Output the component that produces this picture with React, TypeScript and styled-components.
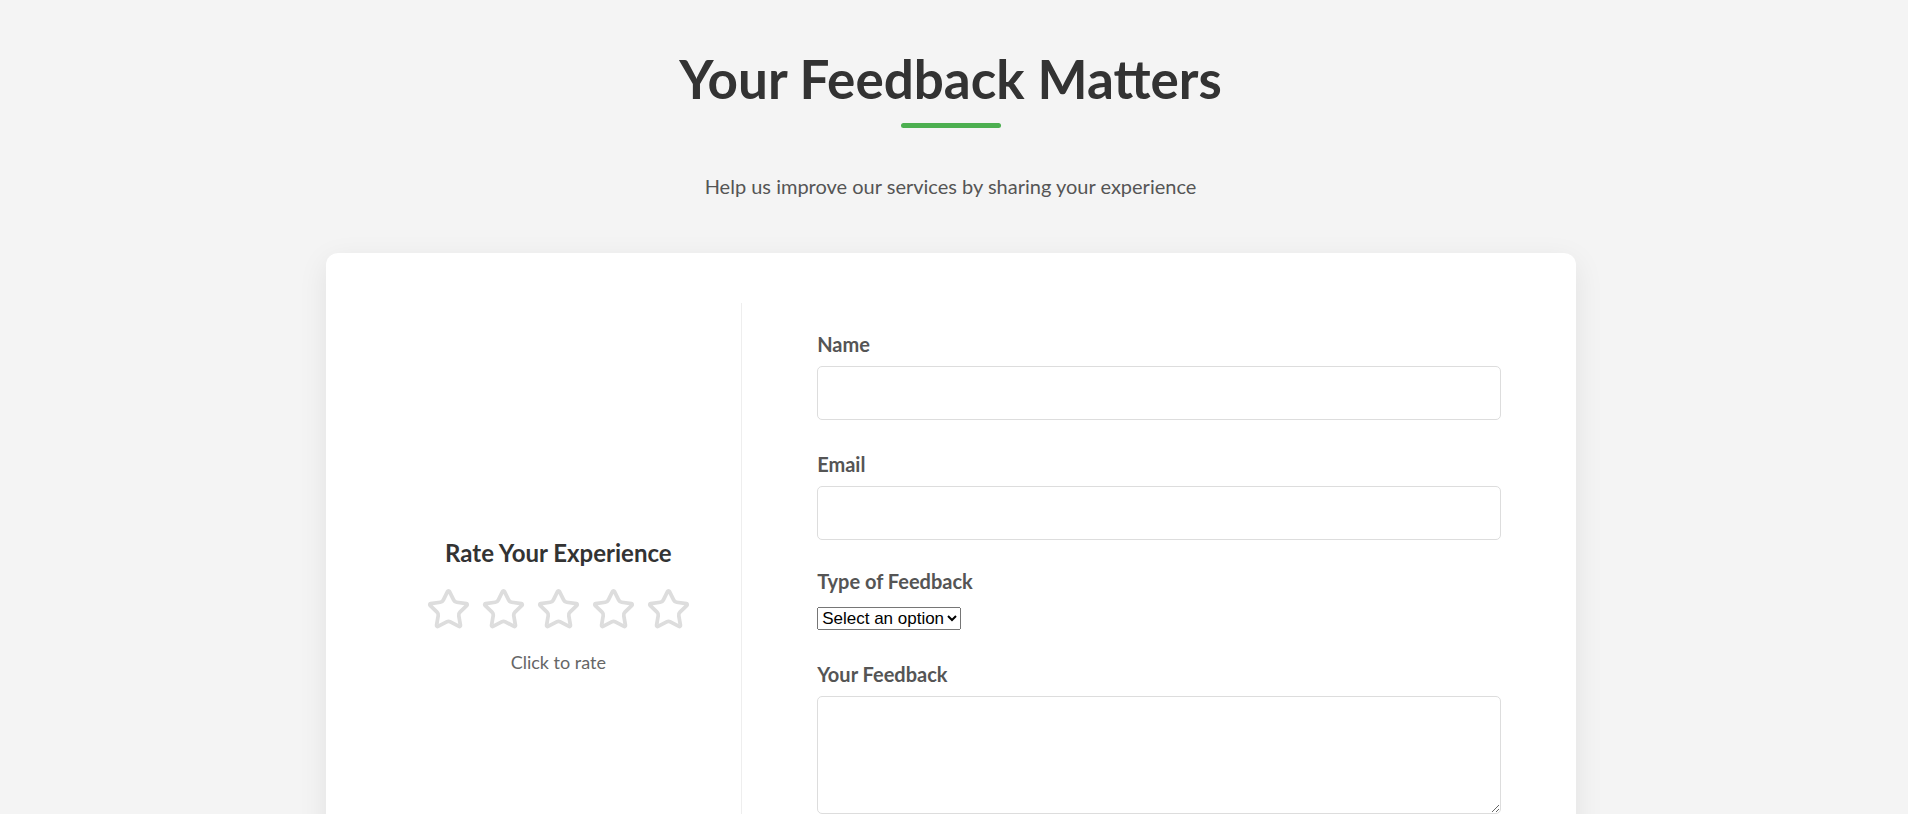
import React, { useState } from 'react';
import styled, { createGlobalStyle } from 'styled-components';
import { Star } from 'lucide-react';

const GlobalStyle = createGlobalStyle`
  * {
    box-sizing: border-box;
  }

  body {
    margin: 0;
    background: #f4f4f4;
    font-family: Lato, "Open Sans", Arial, sans-serif;
    color: #333;
  }
`;

// shadow of the site header that sits just above this section
const TopShadow = styled.div`
  height: 0;
  box-shadow: 0 1px 12px rgba(0, 0, 0, 0.14);
`;

const Section = styled.section`
  padding: 47px 7px 60px 0;
`;

const Header = styled.div`
  display: flex;
  flex-direction: column;
  align-items: center;
  margin-bottom: 54px;
`;

const Title = styled.h1`
  margin: 0;
  font-size: 53px;
  line-height: 1.2;
  font-weight: 700;
  color: #333;
`;

const Underline = styled.div`
  width: 100px;
  height: 5px;
  margin-top: 12px;
  border-radius: 3px;
  background: #4caf50;
`;

const Subtitle = styled.p`
  margin: 46px 0 0;
  font-size: 20px;
  line-height: 25px;
  color: #555;
`;

const Card = styled.div`
  max-width: 1250px;
  margin: 0 auto;
  padding: 50px;
  background: #fff;
  border-radius: 12px;
  box-shadow: 0 8px 30px rgba(0, 0, 0, 0.08);
  display: grid;
  grid-template-columns: 1fr 2fr;
  gap: 50px;
`;

const RatingPanel = styled.div`
  display: flex;
  flex-direction: column;
  align-items: center;
  justify-content: center;
  border-right: 1px solid #eee;
`;

const RatingTitle = styled.h3`
  margin: 0;
  font-size: 24px;
  line-height: 1.2;
  font-weight: 700;
  color: #333;
`;

const Stars = styled.div`
  display: flex;
  gap: 10px;
  margin: 19px 0 20px;
`;

const StarButton = styled.button<{ active: boolean }>`
  padding: 0;
  border: none;
  background: none;
  cursor: pointer;
  display: flex;
  color: ${({ active }) => (active ? '#ffc107' : '#ddd')};
`;

const RatingHint = styled.p`
  margin: 0;
  font-size: 18px;
  line-height: 1.2;
  color: #666;
`;

const Form = styled.form`
  padding: 27px 25px 19px;
`;

const FormGroup = styled.div<{ compact?: boolean }>`
  margin-bottom: ${({ compact }) => (compact ? '27px' : '30px')};
`;

const Label = styled.label`
  display: block;
  margin-bottom: 8px;
  font-size: 20px;
  line-height: 28px;
  font-weight: 700;
  color: #555;
`;

const Input = styled.input`
  display: block;
  width: 100%;
  height: 54px;
  padding: 0 15px;
  border: 1px solid #ddd;
  border-radius: 5px;
  font: inherit;
  font-size: 18px;
`;

const Select = styled.select`
  display: block;
  margin-top: 12px;
  height: 23px;
  font-family: "Liberation Sans", Arial, sans-serif;
  font-size: 17px;
  color: #000;
`;

const TextArea = styled.textarea`
  display: block;
  width: 100%;
  height: 118px;
  padding: 15px;
  border: 1px solid #ddd;
  border-radius: 5px;
  font: inherit;
  font-size: 18px;
`;

const SubmitButton = styled.button`
  width: 100%;
  height: 48px;
  border: none;
  border-radius: 5px;
  background: #4caf50;
  color: #fff;
  font-family: inherit;
  font-size: 20px;
  font-weight: 700;
  cursor: pointer;
`;

const App: React.FC = () => {
  const [rating, setRating] = useState(0);

  return (
    <>
      <GlobalStyle />
      <TopShadow />
      <Section>
        <Header>
          <Title>Your Feedback Matters</Title>
          <Underline />
          <Subtitle>Help us improve our services by sharing your experience</Subtitle>
        </Header>

        <Card>
          <RatingPanel>
            <RatingTitle>Rate Your Experience</RatingTitle>
            <Stars>
              {[1, 2, 3, 4, 5].map((n) => (
                <StarButton key={n} type="button" active={n <= rating} onClick={() => setRating(n)}>
                  <Star size={45} strokeWidth={2} />
                </StarButton>
              ))}
            </Stars>
            <RatingHint>{rating ? `You rated ${rating} of 5` : 'Click to rate'}</RatingHint>
          </RatingPanel>

          <Form onSubmit={(e) => e.preventDefault()}>
            <FormGroup>
              <Label htmlFor="name">Name</Label>
              <Input id="name" type="text" />
            </FormGroup>
            <FormGroup compact>
              <Label htmlFor="email">Email</Label>
              <Input id="email" type="email" />
            </FormGroup>
            <FormGroup>
              <Label htmlFor="type">Type of Feedback</Label>
              <Select id="type" defaultValue="">
                <option value="">Select an option</option>
                <option value="compliment">Compliment</option>
                <option value="suggestion">Suggestion</option>
                <option value="complaint">Complaint</option>
              </Select>
            </FormGroup>
            <FormGroup>
              <Label htmlFor="message">Your Feedback</Label>
              <TextArea id="message" />
            </FormGroup>
            <SubmitButton type="submit">Submit Feedback</SubmitButton>
          </Form>
        </Card>
      </Section>
    </>
  );
};

export default App;
